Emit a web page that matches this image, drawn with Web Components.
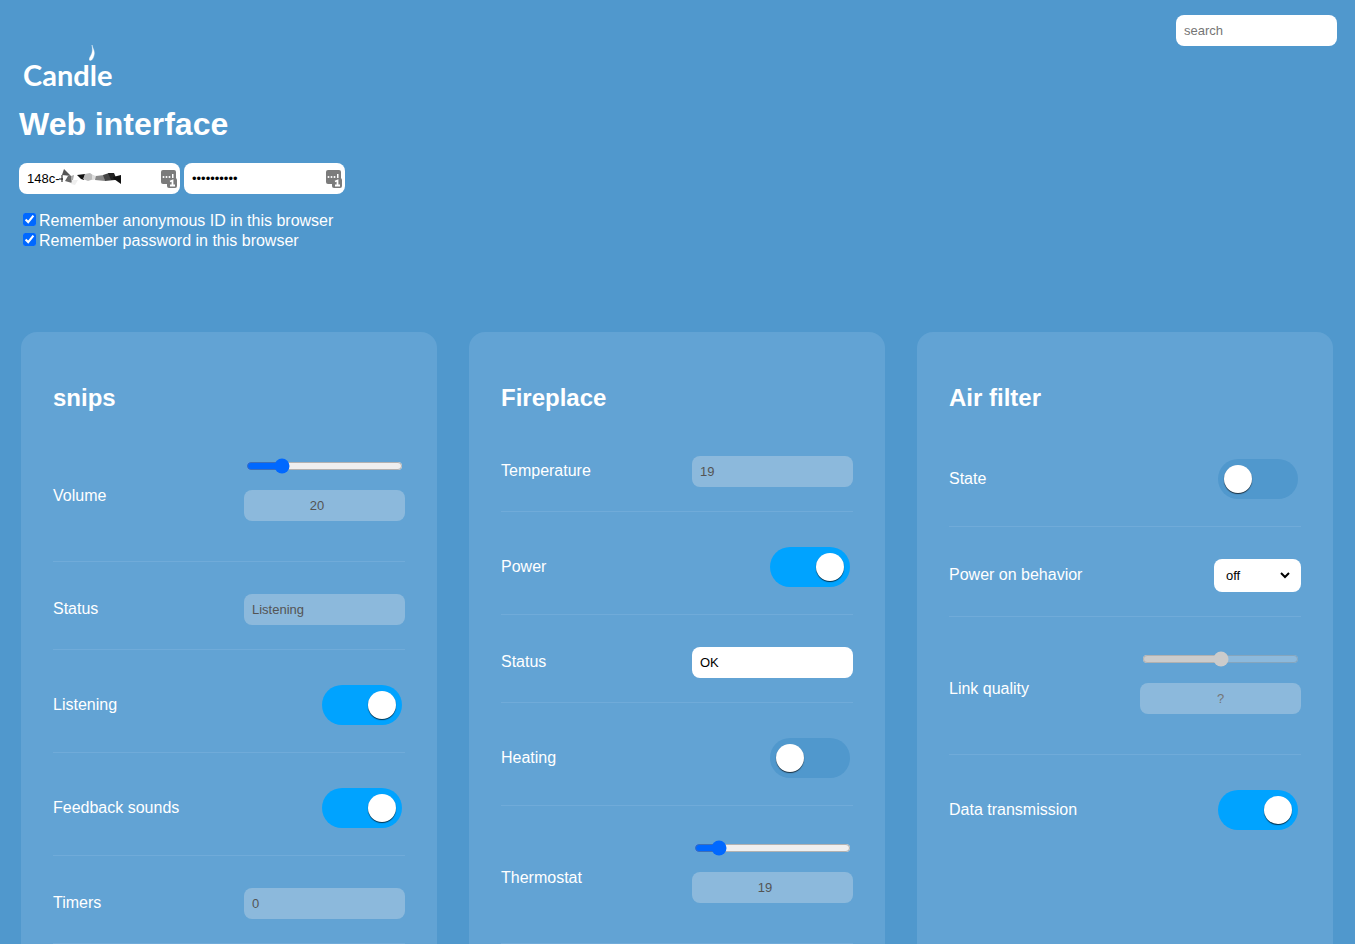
<!DOCTYPE html>
<html lang="en">
<head>
<meta charset="utf-8">
<title>Candle web interface</title>
<style>
  html { background: #5098cd; scrollbar-width: none; }
  body { margin: 0; color: #fff; font: 16px/20px "Liberation Sans", Arial, sans-serif; }
</style>
</head>
<body>
<candle-app>
  <candle-login slot="login"></candle-login>
  <search-box slot="search"></search-box>
  <device-card heading="snips">
    <property-row label="Volume" kind="slider" value="20" percent="20"></property-row>
    <property-row label="Status" kind="text" value="Listening" locked></property-row>
    <property-row label="Listening" kind="switch" on></property-row>
    <property-row label="Feedback sounds" kind="switch" on></property-row>
    <property-row label="Timers" kind="text" value="0" locked></property-row>
  </device-card>
  <device-card heading="Fireplace">
    <property-row label="Temperature" kind="text" value="19" locked></property-row>
    <property-row label="Power" kind="switch" on></property-row>
    <property-row label="Status" kind="text" value="OK"></property-row>
    <property-row label="Heating" kind="switch"></property-row>
    <property-row label="Thermostat" kind="slider" value="19" percent="12"></property-row>
  </device-card>
  <device-card heading="Air filter">
    <property-row label="State" kind="switch"></property-row>
    <property-row label="Power on behavior" kind="select" value="off"></property-row>
    <property-row label="Link quality" kind="slider" percent="50" locked></property-row>
    <property-row label="Data transmission" kind="switch" on plain></property-row>
  </device-card>
</candle-app>

<script>
const fieldStyle = `
  *, *::before { box-sizing: border-box; }
  .field {
    display: block; width: 161px; height: 31px; margin: 0; padding: 8px;
    border: 0; border-radius: 8px; background: #fff; color: #000;
    font-family: inherit; font-size: 13px; line-height: 15px;
  }
  .field::placeholder { color: #757575; }
  .field:disabled { background: rgba(239, 239, 239, .3); color: #545454; opacity: 1; }
`;

class BaseElement extends HTMLElement {
  connectedCallback() {
    if (this.shadowRoot) return;
    this.attachShadow({ mode: 'open' }).innerHTML = this.render();
  }
}

customElements.define('candle-app', class extends BaseElement {
  render() {
    return `<style>
      :host { display: block; }
      header { display: flex; justify-content: space-between; align-items: flex-start; padding: 15px 18px 0 19px; }
      main {
        display: grid; grid-template-columns: repeat(auto-fill, minmax(400px, 1fr)); gap: 32px;
        padding: 81px 22px 32px 21px;
      }
    </style>
    <header><slot name="login"></slot><slot name="search"></slot></header>
    <main><slot></slot></main>`;
  }
});

customElements.define('search-box', class extends BaseElement {
  render() {
    return `<style>:host { display: block; } ${fieldStyle}</style>
    <input class="field" type="text" placeholder="search" aria-label="search">`;
  }
});

customElements.define('candle-logo', class extends BaseElement {
  render() {
    return `<style>
      :host { display: block; position: relative; width: 100px; padding: 0 4px; font: 700 29px/36px Lato, sans-serif; }
      svg { position: absolute; left: 70px; top: -12px; }
    </style>
    Candle<svg width="6" height="16" viewBox="0 0 6 16" aria-hidden="true"><path fill="#fff" stroke="#fff" stroke-width=".4" d="M3 0C3.300 2.700 5.600 5 5.300 8.600 5 12 3.200 15.600 1.200 15.600-.3 15.300.3 12.700 1.500 11.200 3.600 8 3.800 4.500 3 0Z"/></svg>`;
  }
});

customElements.define('credential-field', class extends BaseElement {
  render() {
    const secret = this.hasAttribute('secret');
    const scribble = `<svg class="scribble" width="64" height="20" viewBox="0 0 64 20" aria-hidden="true">
      <path stroke="#111" d="M0 13H4M3 9V16"/>
      <path fill="#555" d="M5 3 12 10 3 9Z"/><path fill="#666" d="M9 10 14 10 13 17 6 15Z"/>
      <path fill="#aaa" d="M12 10 15 9 14 14 12 15Z"/><path fill="#eee" d="M13 14 19 14 16 19 12 18Z"/>
      <path fill="#111" d="M18 9 26 8 25 14 22 13Z"/>
      <path fill="#bbb" d="M26 8 31 7 38 12 29 15 24 13Z"/><path fill="#ddd" d="M33 9 38 10 39 13 33 14Z"/>
      <path fill="#888" d="M37 10 45 9 46 15 36 14Z"/><path fill="#444" d="M44 9 50 7 56 14 46 15Z"/>
      <path fill="#222" d="M49 7 55 7 58 14 52 14Z"/><path fill="#111" d="M54 11 62 9 62 18 55 13Z"/></svg>`;
    return `<style>
      :host { display: block; position: relative; } ${fieldStyle}
      .key { position: absolute; right: 2px; top: 7px; }
      .scribble { position: absolute; left: 40px; top: 3px; }
    </style>
    <input class="field" type="${secret ? 'password' : 'text'}" value="${secret ? 'abcdefghij' : '148c-'}" aria-label="${secret ? 'Password' : 'Anonymous ID'}">
    ${secret ? '' : scribble}
    <svg class="key" width="17" height="18" viewBox="0 0 17 18" aria-hidden="true">
      <rect width="15" height="14" rx="2" fill="#7b7b7b"/>
      <g fill="#fff"><circle cx="2.500" cy="7" r="1"/><circle cx="5.500" cy="7" r="1"/><circle cx="8.500" cy="7" r="1"/><rect x="11" y="4" width="1.500" height="4"/></g>
      <rect x="6" y="8" width="10" height="10" rx="2" fill="#7b7b7b"/>
      <path fill="none" stroke="#fff" stroke-width="1.800" d="M9 11.500 11.500 10.500V15.500M9 15.500H14"/>
    </svg>`;
  }
});

customElements.define('candle-login', class extends BaseElement {
  render() {
    return `<style>
      :host { display: block; padding-top: 42px; }
      h1 { margin: 13px 0 21px; font-size: 32px; line-height: 36px; }
      .fields { display: flex; gap: 4px; margin-bottom: 17px; }
      label { display: flex; align-items: center; height: 20px; }
      input { width: 13px; height: 13px; margin: 0 3px 4px 4px; accent-color: #0068ff; }
    </style>
    <candle-logo></candle-logo>
    <h1>Web interface</h1>
    <div class="fields"><credential-field></credential-field><credential-field secret></credential-field></div>
    <label><input type="checkbox" checked>Remember anonymous ID in this browser</label>
    <label><input type="checkbox" checked>Remember password in this browser</label>`;
  }
});

customElements.define('device-card', class extends BaseElement {
  render() {
    return `<style>
      :host { display: block; padding: 32px; border-radius: 16px; background: #62a3d4; }
      h2 { margin: 20px 0 12px; font-size: 24px; line-height: 28px; }
    </style>
    <h2>${this.getAttribute('heading')}</h2><slot></slot>`;
  }
});

customElements.define('property-row', class extends BaseElement {
  control() {
    const value = this.getAttribute('value');
    const locked = this.hasAttribute('locked') ? 'disabled' : '';
    const name = this.getAttribute('label');
    switch (this.getAttribute('kind')) {
      case 'switch':
        return `<input id="control" class="switch" type="checkbox" role="switch" ${this.hasAttribute('on') ? 'checked' : ''}>`;
      case 'select':
        return `<span class="picker"><select id="control" class="field"><option>${value}</option></select>
          <svg width="10" height="7" viewBox="0 0 10 7" aria-hidden="true"><path fill="none" stroke="#000" stroke-width="2" d="M1 1 5 5 9 1"/></svg></span>`;
      case 'slider':
        return `<div class="slider"><input id="control" type="range" value="${this.getAttribute('percent')}" ${locked}>
          ${value ? `<input class="field" type="number" value="${value}" aria-label="${name} value" disabled>`
                  : `<input class="field" type="text" placeholder="?" aria-label="${name} value" disabled>`}</div>`;
      default:
        return `<input id="control" class="field" type="text" value="${value}" ${locked}>`;
    }
  }
  render() {
    return `<style>
      :host { display: flex; align-items: center; justify-content: space-between; padding: 32px 0 24px; border-bottom: 1px solid #70abd9; }
      :host([plain]) { border-bottom: 0; }
      ${fieldStyle}
      label { padding-bottom: 1px; }
      .slider { padding-bottom: 16px; }
      .slider .field { text-align: center; }
      input[type=range] { display: block; width: 157px; height: 20px; margin: 0 2px 14px; accent-color: #0068ff; }
      .switch {
        appearance: none; width: 80px; height: 40px; margin: 3px; padding: 6px;
        border-radius: 20px; background: #5098cd;
      }
      .switch::before {
        content: ""; display: block; width: 28px; height: 28px; border-radius: 50%;
        background: #fff; box-shadow: 0 1px 1px rgba(0, 0, 0, .7);
      }
      .switch:checked { background: #00a3ff; }
      .switch:checked::before { margin-left: 40px; }
      .picker { display: block; position: relative; }
      select.field { appearance: none; width: 87px; height: 33px; padding: 8px 12px; }
      .picker svg { position: absolute; right: 11px; top: 13px; pointer-events: none; }
    </style>
    <label for="control">${this.getAttribute('label')}</label>
    ${this.control()}`;
  }
});
</script>
</body>
</html>
